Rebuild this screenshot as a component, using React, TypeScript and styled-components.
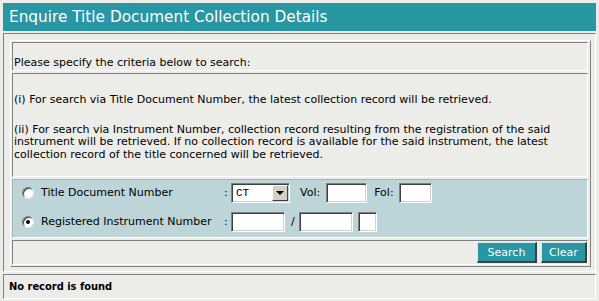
import React from 'react';
import styled, { createGlobalStyle } from 'styled-components';

const GlobalStyle = createGlobalStyle`
  html, body { margin: 0; padding: 0; background: #ECECE9; }
  body {
    font-family: "DejaVu Sans", Verdana, sans-serif;
    font-size: 11px;
    color: #000;
  }
`;

const Page = styled.div`
  width: 599px;
  height: 301px;
  box-sizing: border-box;
  padding: 3px 3px 0 3px;
  display: flex;
  flex-direction: column;
`;

const Header = styled.div`
  height: 28px;
  background: #2896A3;
  color: #fff;
  font-size: 15.3px;
  line-height: 28px;
  padding-left: 6px;
  white-space: nowrap;
`;

const Panel = styled.div`
  margin-top: 2px;
  border: 1px solid;
  border-color: #808080 #fff #fff #808080;
  padding: 6px 4px 4px 6px;
`;

const Table = styled.div`
  border: 1px solid;
  border-color: #fff #808080 #808080 #fff;
  padding: 1px 2px 1px 1px;
  display: flex;
  flex-direction: column;
  gap: 2px;
`;

const Cell = styled.div<{ $h: number; $bg?: string }>`
  box-sizing: border-box;
  height: ${(p) => p.$h}px;
  border: 1px solid;
  border-color: #808080 #fff #fff #808080;
  background: ${(p) => p.$bg || 'transparent'};
  padding-left: 1px;
  line-height: 12.5px;
  white-space: nowrap;
`;

const Para = styled.div<{ $mt: number }>`
  margin-top: ${(p) => p.$mt}px;
`;

const Line = styled.div``;

const CriteriaCell = styled(Cell)`
  background: #BDD4D8;
  border-color: #9fb6ba #fff #fff #9fb6ba;
  padding: 3px 0 0 0;
  display: flex;
  flex-direction: column;
  gap: 9px;
`;

const Row = styled.div`
  display: flex;
  align-items: center;
  height: 20px;
`;

const Radio = styled.span<{ $checked?: boolean }>`
  box-sizing: border-box;
  width: 12px;
  height: 12px;
  border-radius: 50%;
  margin-left: 9px;
  margin-right: 7px;
  background: #fff;
  border: 1px solid;
  border-color: #7a7a7a #e4e4e4 #e4e4e4 #7a7a7a;
  box-shadow: inset 1px 1px 0 #404040;
  display: flex;
  align-items: center;
  justify-content: center;
  &::after {
    content: '';
    width: 4px;
    height: 4px;
    border-radius: 50%;
    background: ${(p) => (p.$checked ? '#000' : 'transparent')};
  }
`;

const Label = styled.span`
  width: 183px;
`;

const Colon = styled.span`
  width: 7px;
`;

const Text = styled.span<{ $ml?: number }>`
  margin-left: ${(p) => p.$ml || 0}px;
`;

const Input = styled.input<{ $w: number; $ml?: number }>`
  box-sizing: border-box;
  width: ${(p) => p.$w}px;
  height: 20px;
  margin: 0 0 0 ${(p) => p.$ml || 0}px;
  padding: 0 2px;
  background: #fff;
  border: 1px solid;
  border-color: #808080 #fff #fff #808080;
  box-shadow: inset 1px 1px 0 #404040, inset -1px -1px 0 #d4d0c8;
  font: 11px "DejaVu Sans", sans-serif;
  outline: none;
`;

const Select = styled.div`
  box-sizing: border-box;
  width: 59px;
  height: 20px;
  background: #fff;
  border: 1px solid;
  border-color: #808080 #fff #fff #808080;
  box-shadow: inset 1px 1px 0 #404040, inset -1px -1px 0 #d4d0c8;
  display: flex;
  align-items: center;
  justify-content: space-between;
  padding: 1px 1px 1px 4px;
  font: 11px "Liberation Mono", monospace;
`;

const SelectArrow = styled.span`
  box-sizing: border-box;
  width: 16px;
  height: 16px;
  background: #D4D0C8;
  border: 1px solid;
  border-color: #fff #404040 #404040 #fff;
  display: flex;
  align-items: center;
  justify-content: center;
  &::after {
    content: '';
    width: 0;
    height: 0;
    border-left: 4px solid transparent;
    border-right: 4px solid transparent;
    border-top: 4px solid #000;
  }
`;

const ButtonCell = styled(Cell)`
  display: flex;
  justify-content: flex-end;
  align-items: flex-start;
  gap: 4px;
  padding: 1px 0 0 0;
`;

const Button = styled.button<{ $w: number }>`
  box-sizing: border-box;
  width: ${(p) => p.$w}px;
  height: 21px;
  margin: 0;
  padding: 0;
  background: #2896A3;
  color: #fff;
  font: 11px "DejaVu Sans", sans-serif;
  border-style: solid;
  border-width: 1px 2px 2px 1px;
  border-color: #d8e8ea #404040 #404040 #d8e8ea;
  cursor: pointer;
`;

const Result = styled.div`
  margin-top: 2px;
  box-sizing: border-box;
  height: 25px;
  border: 1px solid;
  border-color: #808080 #fff #fff #808080;
  padding-left: 5px;
  display: flex;
  align-items: center;
  font-family: "DejaVu Sans Condensed", "DejaVu Sans", sans-serif;
  font-stretch: condensed;
  font-weight: bold;
  font-size: 11px;
`;

export default function App() {
  return (
    <>
      <GlobalStyle />
      <Page>
        <Header>Enquire Title Document Collection Details</Header>
        <Panel>
          <Table>
            <Cell $h={29}>
              <Para $mt={14}>Please specify the criteria below to search:</Para>
            </Cell>
            <Cell $h={104}>
              <Para $mt={20}>
                (i) For search via Title Document Number, the latest collection record will be retrieved.
              </Para>
              <Para $mt={17}>
                <Line>
                  (ii) For search via Instrument Number, collection record resulting from the registration of the said
                </Line>
                <Line>
                  instrument will be retrieved. If no collection record is available for the said instrument, the latest
                </Line>
                <Line>collection record of the title concerned will be retrieved.</Line>
              </Para>
            </Cell>
            <CriteriaCell $h={59}>
              <Row>
                <Radio />
                <Label>Title Document Number</Label>
                <Colon>:</Colon>
                <Select>
                  <span>CT</span>
                  <SelectArrow />
                </Select>
                <Text $ml={10}>Vol:</Text>
                <Input $w={41} $ml={6} />
                <Text $ml={7}>Fol:</Text>
                <Input $w={33} $ml={5} />
              </Row>
              <Row>
                <Radio $checked />
                <Label>Registered Instrument Number</Label>
                <Colon>:</Colon>
                <Input $w={54} />
                <Text $ml={6}>/</Text>
                <Input $w={54} $ml={4} />
                <Input $w={19} $ml={5} />
              </Row>
            </CriteriaCell>
            <ButtonCell $h={25}>
              <Button $w={60}>Search</Button>
              <Button $w={46}>Clear</Button>
            </ButtonCell>
          </Table>
        </Panel>
        <Result>No record is found</Result>
      </Page>
    </>
  );
}
